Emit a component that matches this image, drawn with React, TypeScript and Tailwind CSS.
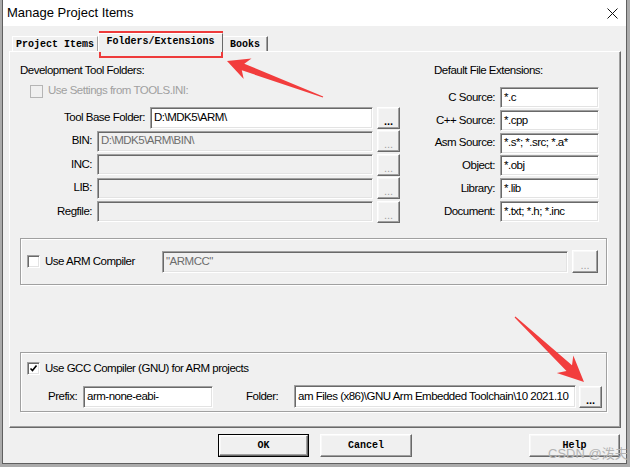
import React from "react";

// classic win32 bevels
const sunken =
  "border border-t-[#a0a0a0] border-l-[#a0a0a0] border-b-white border-r-white shadow-[inset_1px_1px_0_#696969,inset_-1px_-1px_0_#e3e3e3]";
const raised =
  "border border-t-white border-l-white border-b-[#696969] border-r-[#696969] shadow-[inset_-1px_-1px_0_#a0a0a0,inset_1px_1px_0_#f8f8f8]";
const etched = "border border-[#a0a0a0] shadow-[inset_1px_1px_0_#fff,1px_1px_0_#fff]";

function Field({ w, value = "", disabled = false, h = "h-[21px]" }: { w: string; value?: string; disabled?: boolean; h?: string }) {
  return (
    <div
      className={`${w} ${h} ${sunken} ${disabled ? "bg-[#f0f0f0] text-[#6d6d6d]" : "bg-white text-black"} flex items-center pl-[3px] overflow-hidden whitespace-nowrap`}
    >
      {value}
    </div>
  );
}

function Dots({ disabled = false, w = "w-[23px]", h = "h-[22px]" }: { disabled?: boolean; w?: string; h?: string }) {
  return (
    <div className={`${w} ${h} ${raised} bg-[#f0f0f0] flex items-end justify-center pb-[3px]`}>
      <span className={`text-[11px] leading-[8px] tracking-[0px] ${disabled ? "text-[#a0a0a0] font-normal" : "text-black font-bold"}`}>...</span>
    </div>
  );
}

function Check({ checked = false, disabled = false }: { checked?: boolean; disabled?: boolean }) {
  return (
    <div
      className={`w-[13px] h-[13px] shrink-0 border ${
        disabled
          ? "border-[#b5b5b5] bg-[#f0f0f0]"
          : "border-t-[#a0a0a0] border-l-[#a0a0a0] border-b-white border-r-white bg-white shadow-[inset_1px_1px_0_#696969,inset_-1px_-1px_0_#e3e3e3]"
      } flex items-center justify-center`}
    >
      {checked && (
        <svg width="9" height="9" viewBox="0 0 9 9">
          <path d="M1.5 4.5 L3.5 6.5 L7.5 1.5" fill="none" stroke="#000" strokeWidth="1.6" />
        </svg>
      )}
    </div>
  );
}

function Row({ label, children }: { label: string; children: React.ReactNode }) {
  return (
    <div className="h-[21px] flex items-center justify-end">
      <span className="mr-[5px] whitespace-nowrap">{label}</span>
      {children}
    </div>
  );
}

function arrow(tx: number, ty: number, hx: number, hy: number, headLen: number, headHalf: number, neckHalf: number, tailHalf: number) {
  const dx = hx - tx;
  const dy = hy - ty;
  const L = Math.hypot(dx, dy);
  const ux = dx / L;
  const uy = dy / L;
  const px = -uy;
  const py = ux;
  const bx = hx - ux * headLen;
  const by = hy - uy * headLen;
  const nx = hx - ux * headLen * 0.78;
  const ny = hy - uy * headLen * 0.78;
  const pts = [
    [tx + px * tailHalf, ty + py * tailHalf],
    [nx + px * neckHalf, ny + py * neckHalf],
    [bx + px * headHalf, by + py * headHalf],
    [hx, hy],
    [bx - px * headHalf, by - py * headHalf],
    [nx - px * neckHalf, ny - py * neckHalf],
    [tx - px * tailHalf, ty - py * tailHalf],
  ];
  return pts.map((p) => p[0].toFixed(1) + "," + p[1].toFixed(1)).join(" ");
}

const tabFont = "font-['Liberation_Mono','Courier_New',monospace] text-[10px] font-bold tracking-[0px]";

export default function App() {
  return (
    <div className="relative w-[630px] h-[467px] bg-[#ababab] font-['Liberation_Sans',Arial,sans-serif] text-[11.5px] tracking-[-0.5px] text-black overflow-hidden">
      <div className="ml-[2px] w-[625px] h-[464px] flex flex-col border-x border-b border-[#5f5f5f] bg-[#f0f0f0]">
        {/* title bar */}
        <div className="h-[26px] shrink-0 bg-white flex items-center justify-between pl-[4px] pr-[8px]">
          <span className="text-[13px] tracking-[0px]">Manage Project Items</span>
          <svg width="11" height="11" viewBox="0 0 11 11">
            <path d="M0.5 0.5 L10.5 10.5 M10.5 0.5 L0.5 10.5" stroke="#111" strokeWidth="1" />
          </svg>
        </div>

        <div className="flex-1 flex flex-col pl-[6px]">
          {/* tabs */}
          <div className={`mt-[7px] h-[18px] flex items-end pl-[3px] ${tabFont}`}>
            <div className="w-[86px] h-[15px] border-t border-l border-t-white border-l-white border-r border-r-[#a0a0a0] flex items-center justify-center">
              Project Items
            </div>
            <div className="relative z-10 w-[125px] h-[19px] -mb-[1px] bg-[#f0f0f0] border-t border-l border-t-white border-l-white border-r border-r-[#696969] flex items-center justify-center pb-[3px]">
              Folders/Extensions
            </div>
            <div className="w-[45px] h-[15px] border-t border-t-white border-r border-r-[#696969] shadow-[inset_-1px_0_0_#a0a0a0] flex items-center justify-center">
              Books
            </div>
          </div>

          {/* tab panel */}
          <div className="w-[612px] h-[377px] border-t border-l border-t-white border-l-white border-r border-b border-r-[#696969] border-b-[#696969] shadow-[inset_-1px_-1px_0_#a0a0a0] pl-[10px] pt-[11px]">
            <div className="flex">
              {/* tool folders */}
              <div className="w-[380px] flex flex-col">
                <div className="h-[14px] leading-[14px]">Development Tool Folders:</div>
                <div className="mt-[7px] h-[14px] flex items-center pl-[10px]">
                  <Check disabled />
                  <span className="ml-[5px] text-[#a0a0a0]">Use Settings from TOOLS.INI:</span>
                </div>
                <div className="mt-[9px] flex flex-col gap-[2.5px]">
                  <Row label="Tool Base Folder:">
                    <Field w="w-[223px]" h="h-[22px]" value="D:\MDK5\ARM\" />
                    <div className="ml-[4px]">
                      <Dots />
                    </div>
                  </Row>
                  <Row label="BIN:">
                    <Field w="w-[276px]" value="D:\MDK5\ARM\BIN\" disabled />
                    <div className="ml-[4px]">
                      <Dots disabled />
                    </div>
                  </Row>
                  <Row label="INC:">
                    <Field w="w-[276px]" disabled />
                    <div className="ml-[4px]">
                      <Dots disabled />
                    </div>
                  </Row>
                  <Row label="LIB:">
                    <Field w="w-[276px]" disabled />
                    <div className="ml-[4px]">
                      <Dots disabled />
                    </div>
                  </Row>
                  <Row label="Regfile:">
                    <Field w="w-[276px]" disabled />
                    <div className="ml-[4px]">
                      <Dots disabled />
                    </div>
                  </Row>
                </div>
              </div>

              {/* extensions */}
              <div className="w-[199px] flex flex-col">
                <div className="h-[14px] leading-[14px] pl-[34px]">Default File Extensions:</div>
                <div className="mt-[10px] flex flex-col gap-[1.8px]">
                  <Row label="C Source:">
                    <Field w="w-[99px]" value="*.c" />
                  </Row>
                  <Row label="C++ Source:">
                    <Field w="w-[99px]" value="*.cpp" />
                  </Row>
                  <Row label="Asm Source:">
                    <Field w="w-[99px]" value="*.s*; *.src; *.a*" />
                  </Row>
                  <Row label="Object:">
                    <Field w="w-[99px]" value="*.obj" />
                  </Row>
                  <Row label="Library:">
                    <Field w="w-[99px]" value="*.lib" />
                  </Row>
                  <Row label="Document:">
                    <Field w="w-[99px]" value="*.txt; *.h; *.inc" />
                  </Row>
                </div>
              </div>
            </div>

            {/* ARM compiler */}
            <div className={`mt-[16px] w-[587px] h-[47px] ${etched} flex items-center`}>
              <div className="w-[141px] flex items-center pl-[6px]">
                <Check />
                <span className="ml-[5px]">Use ARM Compiler</span>
              </div>
              <Field w="w-[406px]" h="h-[22px]" value={'"ARMCC"'} disabled />
              <div className="ml-[4px]">
                <Dots disabled w="w-[26px]" h="h-[23px]" />
              </div>
            </div>

            {/* GCC compiler */}
            <div className={`mt-[67px] w-[587px] h-[60px] ${etched} flex flex-col`}>
              <div className="mt-[9px] h-[13px] flex items-center pl-[6px]">
                <Check checked />
                <span className="ml-[5px]">Use GCC Compiler (GNU) for ARM projects</span>
              </div>
              <div className="mt-[10px] h-[23px] flex items-center">
                <span className="ml-[27px] w-[35px]">Prefix:</span>
                <Field w="w-[130px]" h="h-[22px]" value="arm-none-eabi-" />
                <span className="ml-[33px] w-[48px]">Folder:</span>
                <Field w="w-[282px]" h="h-[23px]" value="am Files (x86)\GNU Arm Embedded Toolchain\10 2021.10" />
                <div className="ml-[3px]">
                  <Dots />
                </div>
              </div>
            </div>
          </div>

          {/* dialog buttons */}
          <div className={`mt-[6px] h-[23px] flex ${tabFont}`}>
            <div className="ml-[209px] w-[91px] h-[23px] border border-black">
              <div className={`w-full h-full ${raised} bg-[#f0f0f0] flex items-center justify-center`}>OK</div>
            </div>
            <div className={`ml-[11px] w-[92px] h-[23px] ${raised} bg-[#f0f0f0] flex items-center justify-center`}>Cancel</div>
            <div className={`ml-[117px] w-[91px] h-[23px] ${raised} bg-[#f0f0f0] flex items-center justify-center`}>Help</div>
          </div>
        </div>
      </div>

      {/* annotations */}
      <div className="absolute left-[99px] top-[31px] w-[124px] h-[27px] border-2 border-[#ee3b3b]" />
      <svg className="absolute left-0 top-0" width="630" height="467" viewBox="0 0 630 467">
        <polygon points={arrow(323, 97, 227, 61, 22, 11, 3.5, 0.6)} fill="#f23d3d" />
        <polygon points={arrow(515, 317, 584, 382, 26, 12, 4, 0.6)} fill="#f23d3d" />
      </svg>
      <div className="absolute left-[548px] top-[444px] text-[13px] tracking-[0px] text-[#b4b4b4] font-['Liberation_Sans','Noto_Sans_CJK_SC',sans-serif]">
        CSDN @泼夫
      </div>
    </div>
  );
}
